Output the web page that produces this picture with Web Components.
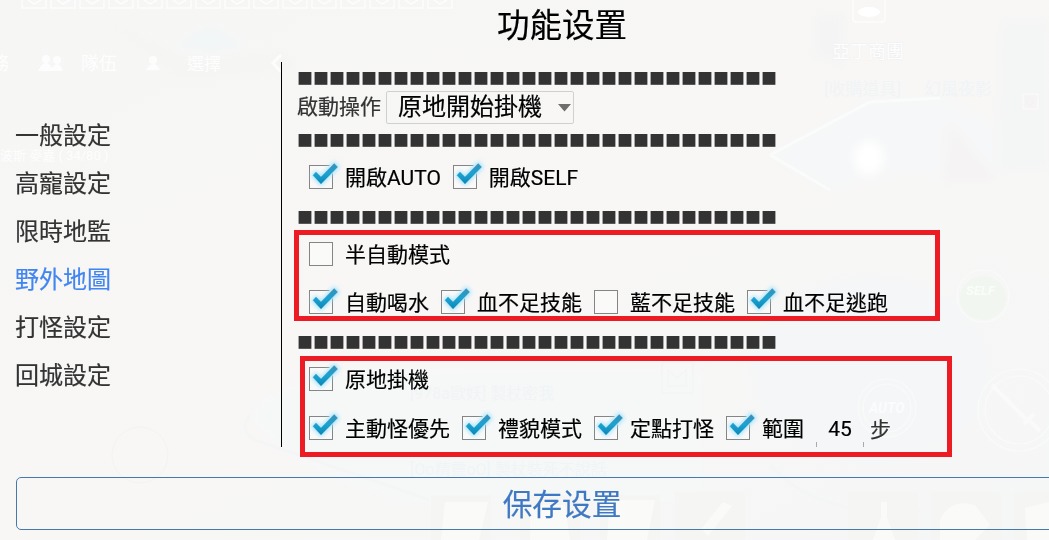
<!DOCTYPE html>
<html lang="zh-Hant">
<head>
<meta charset="utf-8">
<title>功能设置</title>
<style>
	html, body {
		margin: 0;
		height: 100%;
		overflow: hidden;
		background: #f7f7f6;
	}
	body {
		font-family: Roboto, "Noto Sans CJK TC", sans-serif;
		color: #000;
	}
</style>
</head>
<body>

<settings-window heading="功能设置">
	<game-backdrop slot="backdrop"></game-backdrop>

	<side-item slot="menu">一般設定</side-item>
	<side-item slot="menu">高寵設定</side-item>
	<side-item slot="menu">限時地監</side-item>
	<side-item slot="menu" active>野外地圖</side-item>
	<side-item slot="menu">打怪設定</side-item>
	<side-item slot="menu">回城設定</side-item>

	<square-line></square-line>
	<select-row label="啟動操作">原地開始掛機</select-row>
	<square-line class="gap"></square-line>
	<check-row>
		<check-item checked>開啟AUTO</check-item>
		<check-item checked>開啟SELF</check-item>
	</check-row>
	<square-line class="gap"></square-line>
	<check-row>
		<check-item>半自動模式</check-item>
	</check-row>
	<check-row>
		<check-item checked>自動喝水</check-item>
		<check-item checked>血不足技能</check-item>
		<check-item>藍不足技能</check-item>
		<check-item checked>血不足逃跑</check-item>
	</check-row>
	<square-line class="gap"></square-line>
	<check-row>
		<check-item checked>原地掛機</check-item>
	</check-row>
	<check-row class="last">
		<check-item checked>主動怪優先</check-item>
		<check-item checked>禮貌模式</check-item>
		<check-item checked>定點打怪</check-item>
		<check-item checked>範圍</check-item>
		<step-field unit="步">45</step-field>
	</check-row>

	<red-mark slot="marks" style="left:294px;top:230px;width:646px;height:91px"></red-mark>
	<red-mark slot="marks" style="left:300px;top:356px;width:652px;height:101px"></red-mark>

	<save-button slot="footer">保存设置</save-button>
</settings-window>

<script>
class SettingsWindow extends HTMLElement {
	constructor() {
		super();
		this.attachShadow({mode: "open"});
		this.shadowRoot.innerHTML = `
			<style>
				:host{
					display:block;
					position:relative;
					width:1049px;
					height:540px;
					overflow:hidden;
				}
				/* the window runs past the right edge of the screen */
				.frame{
					position:relative;
					display:flex;
					flex-direction:column;
					width:1124px;
					height:540px;
					will-change:transform;
					-webkit-text-stroke:.2px currentColor;
				}
				h1{
					margin:0;
					height:62px;
					line-height:52px;
					text-align:center;
					font-size:32.5px;
					font-weight:400;
					font-family:Roboto, "Noto Sans CJK SC", sans-serif;
				}
				.body{
					display:grid;
					grid-template-columns:281px 1fr;
					grid-template-rows:385px;
					height:385px;
				}
				nav{
					display:flex;
					flex-direction:column;
					padding:50px 0 0 15px;
				}
				.content{
					display:flex;
					flex-direction:column;
					align-items:flex-start;
					box-sizing:border-box;
					height:385px;
					border-left:1px solid #000;
					padding:4px 0 0 15px;
				}
				.content ::slotted(*){
					flex:none;
				}
				.content ::slotted(.gap){
					margin-top:4px;
				}
				footer{
					padding:30px 16px 0;
				}
			</style>
			<slot name="backdrop"></slot>
			<div class="frame">
				<h1></h1>
				<div class="body">
					<nav><slot name="menu"></slot></nav>
					<div class="content"><slot></slot></div>
				</div>
				<footer><slot name="footer"></slot></footer>
			</div>
			<slot name="marks"></slot>
		`;
	}

	connectedCallback() {
		this.shadowRoot.querySelector('h1').textContent = this.getAttribute('heading');
	}
}

class SideItem extends HTMLElement {
	constructor() {
		super();
		this.attachShadow({mode: "open"});
		this.shadowRoot.innerHTML = `
			<style>
				:host{
					display:block;
					height:48px;
					line-height:48px;
					font-size:24px;
					color:#333;
				}
				:host([active]){
					color:#4285f0;
				}
			</style>
			<slot></slot>
		`;
	}
}

class SquareLine extends HTMLElement {
	constructor() {
		super();
		this.attachShadow({mode: "open"});
		this.shadowRoot.innerHTML = `
			<style>
				:host{
					display:block;
					height:25px;
					line-height:23px;
					font-family:"Noto Sans CJK TC", sans-serif;
					font-size:16px;
					color:#333;
					white-space:nowrap;
					-webkit-text-stroke:0;
				}
			</style>
			<span></span>
		`;
		this.shadowRoot.querySelector('span').textContent = '■'.repeat(30);
	}
}

class SelectRow extends HTMLElement {
	constructor() {
		super();
		this.attachShadow({mode: "open"});
		this.shadowRoot.innerHTML = `
			<style>
				:host{
					display:flex;
					align-items:center;
					height:33px;
					font-size:21px;
					color:#333;
				}
				label{
					width:89px;
					line-height:35px;
				}
				.select{
					display:flex;
					align-items:center;
					justify-content:space-between;
					box-sizing:border-box;
					width:188px;
					height:33px;
					padding:0 2px 0 11px;
					border:1px solid #d0d0d0;
					border-radius:2px;
					line-height:33px;
					font-size:24px;
					color:#000;
				}
			</style>
			<label></label>
			<div class="select">
				<slot></slot>
				<svg width="13" height="8" viewBox="0 0 13 8"><path d="M0 0h13L6.5 7.5z" fill="#6e6e6e"/></svg>
			</div>
		`;
	}

	connectedCallback() {
		this.shadowRoot.querySelector('label').textContent = this.getAttribute('label');
	}
}

class CheckRow extends HTMLElement {
	constructor() {
		super();
		this.attachShadow({mode: "open"});
		this.shadowRoot.innerHTML = `
			<style>
				:host{
					display:flex;
					align-items:center;
					gap:12px;
					height:48px;
					padding-left:12px;
				}
				:host(.last){
					height:50px;
				}
			</style>
			<slot></slot>
		`;
	}
}

class CheckItem extends HTMLElement {
	constructor() {
		super();
		this.attachShadow({mode: "open"});
		this.shadowRoot.innerHTML = `
			<style>
				:host{
					display:flex;
					align-items:center;
					gap:12px;
					font-size:21px;
					line-height:24px;
					white-space:nowrap;
				}
				span{
					padding-top:2px;
				}
				svg{
					flex:none;
					overflow:visible;
				}
				.tick{
					display:none;
				}
				:host([checked]) .tick{
					display:block;
				}
			</style>
			<svg width="24" height="24" viewBox="0 0 24 24">
				<defs>
					<linearGradient id="blue" x1="0" y1="0" x2="0" y2="1">
						<stop offset="0" stop-color="#3d8fb5"/>
						<stop offset=".5" stop-color="#1ba2d0"/>
						<stop offset="1" stop-color="#0b86b8"/>
					</linearGradient>
					<filter id="glow" x="-40%" y="-40%" width="180%" height="180%">
						<feGaussianBlur stdDeviation="1.9"/>
					</filter>
				</defs>
				<rect x=".5" y=".5" width="23" height="23" fill="#fff" fill-opacity=".35" stroke="#858585"/>
				<g class="tick">
					<path d="M20.5 .5h3v8" fill="none" stroke="#eef7fa" stroke-width="1.6"/>
					<path d="M4 10.5L7 7.3L12 12.3L25.2 -1.5L28.6 2L12 18.9Z" fill="#a4e2fa" stroke="#a4e2fa" stroke-width="3" filter="url(#glow)"/>
					<path d="M4 10.3L7 7L12 12L25.2 -1.5L28.6 2L12 18.9Z" fill="url(#blue)" stroke="#1b93c0" stroke-width=".3"/>
				</g>
			</svg>
			<span><slot></slot></span>
		`;
	}
}

class StepField extends HTMLElement {
	constructor() {
		super();
		this.attachShadow({mode: "open"});
		this.shadowRoot.innerHTML = `
			<style>
				:host{
					display:flex;
					align-items:center;
					font-size:21px;
					line-height:24px;
				}
				/* only the feet of the side borders are drawn */
				.value{
					box-sizing:border-box;
					width:48px;
					height:38px;
					line-height:40px;
					text-align:center;
					background:
						linear-gradient(#aaa, #aaa) left bottom / 1px 5px no-repeat,
						linear-gradient(#aaa, #aaa) right bottom / 1px 5px no-repeat;
				}
				.unit{
					margin:4px 0 0 6px;
					color:#333;
				}
			</style>
			<div class="value"><slot></slot></div>
			<div class="unit"></div>
		`;
	}

	connectedCallback() {
		this.shadowRoot.querySelector('.unit').textContent = this.getAttribute('unit');
	}
}

class SaveButton extends HTMLElement {
	constructor() {
		super();
		this.attachShadow({mode: "open"});
		this.shadowRoot.innerHTML = `
			<style>
				:host{
					display:block;
					box-sizing:border-box;
					height:53px;
					border:1px solid #4679ab;
					border-radius:5px;
					line-height:53px;
					text-align:center;
					font-family:Roboto, "Noto Sans CJK SC", sans-serif;
					font-size:29.7px;
					color:#3f79c4;
				}
			</style>
			<slot></slot>
		`;
	}
}

class RedMark extends HTMLElement {
	constructor() {
		super();
		this.attachShadow({mode: "open"});
		this.shadowRoot.innerHTML = `
			<style>
				:host{
					position:absolute;
					box-sizing:border-box;
					border:5px solid #ed1c24;
				}
			</style>
		`;
	}
}

// game scene that shines faintly through the window
class GameBackdrop extends HTMLElement {
	constructor() {
		super();
		this.attachShadow({mode: "open"});

		let slots = '';
		for (let x = 22; x < 450; x += 29) {
			slots += `<path d="M${x} -4V8h24V-4M${x + 6} 0l6 4l7 -4"/>`;
		}

		this.shadowRoot.innerHTML = `
			<style>
				:host{
					position:absolute;
					inset:0;
				}
				svg{
					display:block;
				}
				text{
					font-family:Roboto, "Noto Sans CJK TC", sans-serif;
				}
			</style>
			<svg width="1049" height="540" viewBox="0 0 1049 540">
				<defs>
					<filter id="soft"><feGaussianBlur stdDeviation="5"/></filter>
					<linearGradient id="ground" x1="0" y1="0" x2="1" y2="1">
						<stop offset="0" stop-color="#f6f6f5"/>
						<stop offset=".5" stop-color="#f8f7f6"/>
						<stop offset="1" stop-color="#f5f6f6"/>
					</linearGradient>
				</defs>
				<rect width="1049" height="540" fill="url(#ground)"/>
				<g filter="url(#soft)">
					<path d="M175 45L210 27L245 45L210 50Z" fill="#f1f6f7"/>
					<path d="M100 15L190 60L280 50L300 70L180 80Z" fill="#f5f5f4"/>
					<path d="M770 155L870 100L940 98L1049 150L1000 175H890L830 190Z" fill="#f6f7f8"/>
					<path d="M815 15h28v55l-14-12h-14z" fill="#f4f4f4"/>
					<path d="M1000 20h49v150h-52z" fill="#f4f5f5"/>
					<ellipse cx="870" cy="370" rx="120" ry="95" fill="#f5f6f7"/>
					<path d="M250 415Q270 385 350 370H700V500H400Q280 460 250 415Z" fill="#f6f8f8"/>
					<path d="M950 125l45 55h-50z" fill="#f5f3f3"/>
					<ellipse cx="869" cy="158" rx="15" ry="17" fill="#fff"/>
				</g>
				<g fill="none" stroke="#fdfdfd" stroke-width="1.5">
					${slots}
					<path d="M770 155L870 102L940 98M770 155L830 190" stroke="#fafbfb" stroke-width="3"/>
					<path d="M281 55l-8 8l8 9" stroke-width="3"/>
					<path d="M853 0v19q0 3 3 3h26q3 0 3 -3V0"/>
					<rect x="1023" y="94" width="15" height="15" stroke="#fdf7f6"/>
					<g stroke="#f9fafa" stroke-width="1.2">
						<circle cx="983" cy="296" r="26"/>
						<circle cx="887" cy="408" r="29"/>
						<circle cx="887" cy="408" r="24"/>
						<circle cx="1019" cy="410" r="41"/>
						<circle cx="1019" cy="410" r="34"/>
					</g>
					<path d="M992 385l36 36M1024 424l10-10M1030 421l10 10" stroke="#fafafa" stroke-width="4"/>
					<path d="M662 362h31v31h-31zM668 370l9 8l9-8v16h-18z" stroke="#f4f4f4"/>
				</g>
				<ellipse cx="869" cy="12" rx="11" ry="5" fill="#fff"/>
				<text x="1026" y="106" font-size="12" fill="#fbf1f0">Q</text>
				<circle cx="140" cy="455" r="28" fill="none" stroke="#f3f3f2"/>
				<path d="M250 415q-12 15 5 25L430 500M770 465q50 55 150 45" fill="none" stroke="#f4f5f5" stroke-width="3"/>
				<g fill="#f5f5f4">
					<rect x="431" y="495" width="60" height="45"/>
					<rect x="520" y="495" width="60" height="45"/>
					<rect x="600" y="495" width="60" height="45"/>
					<rect x="675" y="492" width="70" height="48"/>
					<rect x="848" y="492" width="70" height="48"/>
					<rect x="931" y="492" width="70" height="48"/>
					<rect x="1014" y="492" width="35" height="48"/>
				</g>
				<g fill="#fafaf9">
					<path d="M445 502h43l-9 38h-38zM530 505h35l5 35h-40zM610 500h45l-8 40h-40zM723 502l9 4l-24 30l-7-7z"/>
					<path d="M881 502h6v15l8 23h-22l8-23zM940 520q10-22 35-15l15 20l-15 15h-35zM1025 508l24-6v38h-22z"/>
				</g>
				<g fill="#fdfdfd">
					<circle cx="46" cy="59" r="4"/><path d="M38 71q8-16 16 0z"/>
					<circle cx="57" cy="60" r="4"/><path d="M50 71q8-14 13 0z"/>
					<circle cx="153" cy="60" r="4"/><path d="M146 70q8-12 14 0z"/>
				</g>
				<g fill="#fefefe" font-size="18">
					<text x="-9" y="70">務</text>
					<text x="81" y="70">隊伍</text>
					<text x="187" y="70" font-size="17">選擇</text>
					<text x="0" y="160" font-size="13">波斯 麥嘉 ( 34/80 )</text>
					<text x="832" y="58" stroke="#f0f0f0" stroke-width=".8" paint-order="stroke">亞丁商團</text>
				</g>
				<g fill="#f0f4f6" font-size="17">
					<text x="824" y="95">[收購道具]</text>
					<text x="924" y="95">幻風夜影</text>
					<text x="410" y="399" font-size="16">[978a歐妖] 製杖密我</text>
					<text x="410" y="475" font-size="16">[Oo精靈oO] 製杖裝死不說話</text>
				</g>
				<ellipse cx="983" cy="298" rx="23" ry="22" fill="#f1f6f1"/>
				<text x="966" y="295" font-size="13" font-weight="700" font-style="italic" fill="#fafdf8">SELF</text>
				<text x="869" y="413" font-size="14" font-weight="700" font-style="italic" fill="#fcfcfc">AUTO</text>
			</svg>
		`;
	}
}

customElements.define('settings-window', SettingsWindow);
customElements.define('side-item', SideItem);
customElements.define('square-line', SquareLine);
customElements.define('select-row', SelectRow);
customElements.define('check-row', CheckRow);
customElements.define('check-item', CheckItem);
customElements.define('step-field', StepField);
customElements.define('save-button', SaveButton);
customElements.define('red-mark', RedMark);
customElements.define('game-backdrop', GameBackdrop);
</script>
</body>
</html>
